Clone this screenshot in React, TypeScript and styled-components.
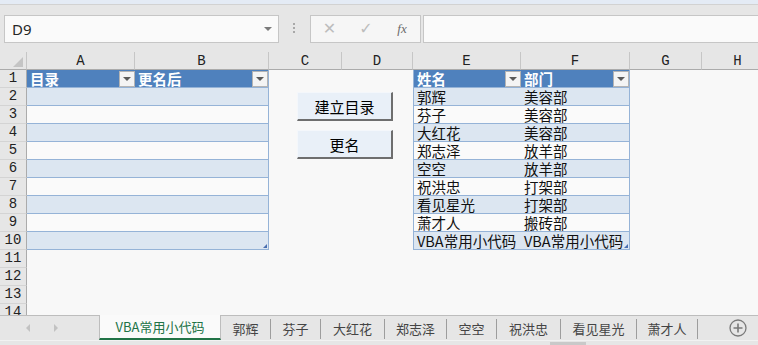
import React from 'react';
import styled, { createGlobalStyle, css } from 'styled-components';

const Global = createGlobalStyle`
  html, body { margin: 0; padding: 0; background: #e6e6e6; }
  body { width: 758px; height: 345px; overflow: hidden; font-family: "Noto Sans CJK SC", "Noto Sans", sans-serif; }
  * { box-sizing: border-box; }
`;

const Window = styled.div`
  width: 758px;
  height: 345px;
  display: flex;
  flex-direction: column;
  overflow: hidden;
  background: #e6e6e6;
`;

const TopStrip = styled.div`
  height: 5px;
  flex: none;
  background: #e4ebf5;
  border-bottom: 1px solid #d2d2d2;
`;

const FormulaBar = styled.div`
  height: 47px;
  flex: none;
  display: flex;
  align-items: flex-start;
  padding: 10px 0 0 4px;
`;

const NameBox = styled.div`
  width: 275px;
  height: 28px;
  border: 1px solid #c6c6c6;
  background: #fafafa;
  display: flex;
  align-items: center;
  justify-content: space-between;
  padding: 0 6px 0 7px;
  font-family: "Noto Sans", "Open Sans", sans-serif;
  font-size: 15px;
  color: #262626;
`;

const DropArrow = styled.span`
  width: 0;
  height: 0;
  border-left: 4px solid transparent;
  border-right: 4px solid transparent;
  border-top: 4px solid #7a7a7a;
`;

const Dots = styled.div`
  margin: 8px 0 0 14px;
  width: 3px;
  display: flex;
  flex-direction: column;
  gap: 2px;
`;

const Dot = styled.span`
  width: 2px;
  height: 2px;
  background: #a8a8a8;
`;

const FxGroup = styled.div`
  margin-left: 14px;
  width: 111px;
  height: 28px;
  border: 1px solid #c6c6c6;
  background: #f6f6f6;
  display: flex;
  align-items: center;
`;

const FxButton = styled.span<{ $w: number; $italic?: boolean }>`
  width: ${p => p.$w}px;
  text-align: center;
  color: ${p => (p.$italic ? '#6a6a6a' : '#bdbdbd')};
  font-size: ${p => (p.$italic ? '13px' : '16px')};
  font-family: ${p => (p.$italic ? '"Liberation Serif", serif' : '"DejaVu Sans", sans-serif')};
  font-style: ${p => (p.$italic ? 'italic' : 'normal')};
  line-height: 26px;
`;

const FormulaInput = styled.div`
  margin-left: 2px;
  flex: 1;
  height: 28px;
  border: 1px solid #c6c6c6;
  border-right: none;
  background: #fafafa;
`;

const Sheet = styled.div`
  position: relative;
  height: 263px;
  flex: none;
  overflow: hidden;
  background: #f8f8f8;
`;

const Grid = styled.div`
  display: grid;
  grid-template-columns: 27px 108px 134px 73px 71px 108px 109px 72px 72px;
  grid-auto-rows: 18px;
  width: 774px;
`;

const Corner = styled.div`
  background: #e6e6e6;
  border-right: 1px solid #c6c6c6;
  border-bottom: 1px solid #ababab;
  display: flex;
  align-items: flex-end;
  justify-content: flex-end;
  padding: 0 3px 2px 0;
`;

const CornerMark = styled.span`
  width: 0;
  height: 0;
  border-left: 10px solid transparent;
  border-bottom: 10px solid #c4c4c4;
`;

const ColHead = styled.div`
  background: #e6e6e6;
  border-right: 1px solid #c6c6c6;
  border-bottom: 1px solid #ababab;
  font-family: "Liberation Mono", monospace;
  font-size: 14px;
  line-height: 18px;
  text-align: center;
  color: #222;
`;

const RowHead = styled.div`
  background: #e6e6e6;
  border-right: 1px solid #ababab;
  border-bottom: 1px solid #d4d4d4;
  font-family: "Liberation Mono", monospace;
  font-size: 14px;
  line-height: 17px;
  text-align: center;
  color: #222;
`;

type Kind = 'head' | 'band' | 'plain' | 'empty';

const Cell = styled.div<{ $kind: Kind; $left?: boolean; $right?: boolean; $handle?: boolean }>`
  position: relative;
  display: flex;
  align-items: center;
  justify-content: space-between;
  padding-left: 3px;
  font-size: 14.5px;
  line-height: 17px;
  white-space: nowrap;
  color: #111;
  ${p => p.$kind !== 'empty' && css`
    border-bottom: 1px solid #95b3d7;
  `}
  ${p => p.$kind === 'head' && css`
    background: #4f81bd;
    color: #fff;
    font-weight: 700;
  `}
  ${p => p.$kind === 'band' && css`background: #dce6f1;`}
  ${p => p.$kind === 'plain' && css`background: #fafafa;`}
  ${p => p.$left && css`border-left: 1px solid #95b3d7;`}
  ${p => p.$right && css`border-right: 1px solid #95b3d7;`}
  ${p => p.$handle && css`
    &::after {
      content: '';
      position: absolute;
      right: 1px;
      bottom: 1px;
      width: 0;
      height: 0;
      border-left: 4px solid transparent;
      border-bottom: 4px solid #4a6fb0;
    }
  `}
`;

const FilterButton = styled.span`
  flex: none;
  width: 16px;
  height: 16px;
  background: #f4f4f4;
  border: 1px solid #b4b4b4;
  display: flex;
  align-items: center;
  justify-content: center;
`;

const FilterArrow = styled.span`
  width: 0;
  height: 0;
  border-left: 4px solid transparent;
  border-right: 4px solid transparent;
  border-top: 4px solid #5a5a5a;
`;

const ButtonStack = styled.div`
  position: absolute;
  left: 297px;
  top: 40px;
  display: flex;
  flex-direction: column;
  gap: 9px;
`;

const MacroButton = styled.div`
  width: 96px;
  height: 29px;
  background: #e9f0f8;
  border-top: 1px solid #f4f7fb;
  border-left: 1px solid #f4f7fb;
  border-right: 2px solid #6e6e6e;
  border-bottom: 2px solid #6e6e6e;
  display: flex;
  align-items: center;
  justify-content: center;
  font-size: 15px;
  color: #000;
`;

const TabBar = styled.div`
  height: 30px;
  flex: none;
  border-top: 1px solid #bdbdbd;
  display: flex;
  flex-direction: column;
`;

const TabRow = styled.div`
  height: 24px;
  display: flex;
  align-items: stretch;
`;

const Nav = styled.div`
  width: 99px;
  display: flex;
  align-items: center;
  padding-left: 26px;
  gap: 24px;
`;

const NavArrow = styled.span<{ $dir: 'l' | 'r' }>`
  width: 0;
  height: 0;
  border-top: 4px solid transparent;
  border-bottom: 4px solid transparent;
  ${p => (p.$dir === 'l' ? 'border-right: 4px solid #c2c2c2;' : 'border-left: 4px solid #c2c2c2;')}
`;

const ActiveTab = styled.div`
  margin-top: -1px;
  height: 25px;
  width: 122px;
  flex: none;
  background: #fafafa;
  border-left: 1px solid #bdbdbd;
  border-right: 1px solid #bdbdbd;
  border-bottom: 2px solid #217346;
  display: flex;
  align-items: center;
  justify-content: center;
  font-size: 13px;
  color: #217346;
  white-space: nowrap;
`;

const Tab = styled.div<{ $w: number }>`
  width: ${p => p.$w}px;
  flex: none;
  display: flex;
  align-items: center;
  justify-content: center;
  font-size: 13px;
  color: #444;
  white-space: nowrap;
`;

const Divider = styled.span`
  width: 1px;
  flex: none;
  height: 20px;
  margin-top: 3px;
  background: #9d9d9d;
`;

const AddSheet = styled.div`
  margin-left: auto;
  margin-right: 11px;
  display: flex;
  align-items: center;
`;

const BottomStrip = styled.div`
  flex: 1;
  border-top: 1px solid #f2f2f2;
  display: flex;
  padding-left: 550px;
`;

const Thumb = styled.span`
  width: 36px;
  height: 3px;
  margin-top: 1px;
  background: #c9c9c9;
`;

const cols = ['A', 'B', 'C', 'D', 'E', 'F', 'G', 'H'];

const people: [string, string][] = [
  ['郭辉', '美容部'],
  ['芬子', '美容部'],
  ['大红花', '美容部'],
  ['郑志泽', '放羊部'],
  ['空空', '放羊部'],
  ['祝洪忠', '打架部'],
  ['看见星光', '打架部'],
  ['萧才人', '搬砖部'],
  ['VBA常用小代码', 'VBA常用小代码'],
];

const tabs: [string, number][] = [
  ['郭辉', 49],
  ['芬子', 49],
  ['大红花', 63],
  ['郑志泽', 61],
  ['空空', 49],
  ['祝洪忠', 63],
  ['看见星光', 75],
  ['萧才人', 60],
];

function kindFor(row: number): Kind {
  if (row === 1) return 'head';
  if (row > 10) return 'empty';
  return row % 2 === 0 ? 'band' : 'plain';
}

function renderCell(row: number, col: number) {
  const key = `${row}-${col}`;
  const inT1 = col === 0 || col === 1;
  const inT2 = col === 4 || col === 5;
  if ((!inT1 && !inT2) || row > 10) return <Cell key={key} $kind="empty" />;
  const kind = kindFor(row);
  const isLast = col === 1 || col === 5;
  let text = '';
  if (row === 1) text = ['目录', '更名后', '', '', '姓名', '部门'][col];
  else if (inT2) text = people[row - 2][col - 4];
  return (
    <Cell key={key} $kind={kind} $left={col === 4} $right={isLast} $handle={row === 10 && isLast}>
      <span>{text}</span>
      {row === 1 && (
        <FilterButton>
          <FilterArrow />
        </FilterButton>
      )}
    </Cell>
  );
}

export default function App() {
  const rows = Array.from({ length: 14 }, (_, i) => i + 1);
  return (
    <Window>
      <Global />
      <TopStrip />
      <FormulaBar>
        <NameBox>
          <span>D9</span>
          <DropArrow />
        </NameBox>
        <Dots>
          <Dot />
          <Dot />
          <Dot />
        </Dots>
        <FxGroup>
          <FxButton $w={37}>✕</FxButton>
          <FxButton $w={36}>✓</FxButton>
          <FxButton $w={36} $italic>fx</FxButton>
        </FxGroup>
        <FormulaInput />
      </FormulaBar>
      <Sheet>
        <Grid>
          <Corner>
            <CornerMark />
          </Corner>
          {cols.map(c => (
            <ColHead key={c}>{c}</ColHead>
          ))}
          {rows.map(r => (
            <React.Fragment key={r}>
              <RowHead>{r}</RowHead>
              {cols.map((_, ci) => renderCell(r, ci))}
            </React.Fragment>
          ))}
        </Grid>
        <ButtonStack>
          <MacroButton>建立目录</MacroButton>
          <MacroButton>更名</MacroButton>
        </ButtonStack>
      </Sheet>
      <TabBar>
        <TabRow>
          <Nav>
            <NavArrow $dir="l" />
            <NavArrow $dir="r" />
          </Nav>
          <ActiveTab>VBA常用小代码</ActiveTab>
          {tabs.map(([name, w]) => (
            <React.Fragment key={name}>
              <Tab $w={w}>{name}</Tab>
              <Divider />
            </React.Fragment>
          ))}
          <AddSheet>
            <svg width="18" height="18" viewBox="0 0 18 18">
              <circle cx="9" cy="9" r="8" fill="none" stroke="#7a7a7a" strokeWidth="1.3" />
              <path d="M9 4.5v9M4.5 9h9" stroke="#7a7a7a" strokeWidth="1.6" />
            </svg>
          </AddSheet>
        </TabRow>
        <BottomStrip>
          <Thumb />
        </BottomStrip>
      </TabBar>
    </Window>
  );
}
